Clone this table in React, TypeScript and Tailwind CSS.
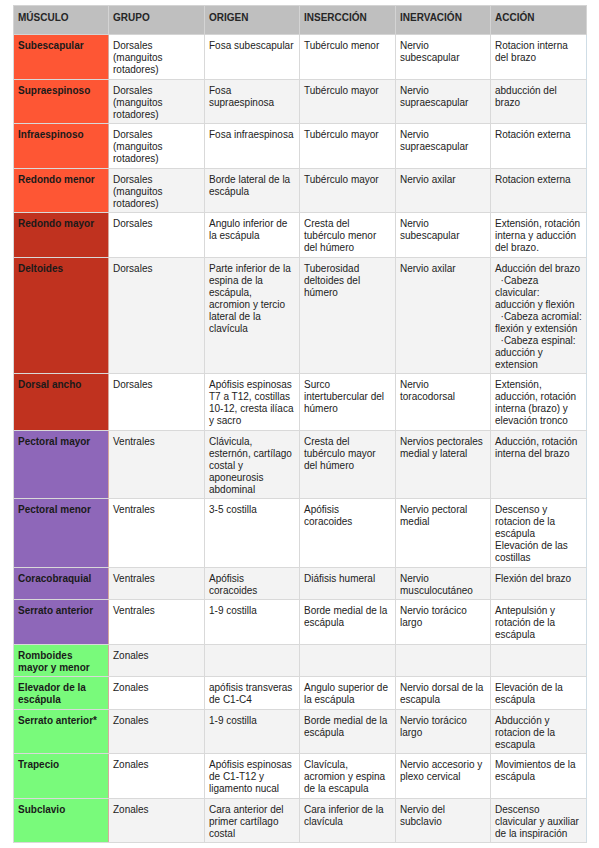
import React from 'react';

type Row = {
  name: string;
  color: string;
  cells: string[];
};

const ORANGE = 'bg-[#fe5634]';
const DARK = 'bg-[#c0321f]';
const PURPLE = 'bg-[#8e67b9]';
const GREEN = 'bg-[#79fa7b]';

const rows: Row[] = [
  { name: 'Subescapular', color: ORANGE, cells: ['Dorsales\n(manguitos\nrotadores)', 'Fosa subescapular', 'Tubérculo menor', 'Nervio\nsubescapular', 'Rotacion interna\ndel brazo'] },
  { name: 'Supraespinoso', color: ORANGE, cells: ['Dorsales\n(manguitos\nrotadores)', 'Fosa\nsupraespinosa', 'Tubérculo mayor', 'Nervio\nsupraescapular', 'abducción del\nbrazo'] },
  { name: 'Infraespinoso', color: ORANGE, cells: ['Dorsales\n(manguitos\nrotadores)', 'Fosa infraespinosa', 'Tubérculo mayor', 'Nervio\nsupraescapular', 'Rotación externa'] },
  { name: 'Redondo menor', color: ORANGE, cells: ['Dorsales\n(manguitos\nrotadores)', 'Borde lateral de la\nescápula', 'Tubérculo mayor', 'Nervio axilar', 'Rotacion externa'] },
  { name: 'Redondo mayor', color: DARK, cells: ['Dorsales', 'Angulo inferior de\nla escápula', 'Cresta del\ntubérculo menor\ndel húmero', 'Nervio\nsubescapular', 'Extensión, rotación\ninterna y aducción\ndel brazo.'] },
  { name: 'Deltoides', color: DARK, cells: ['Dorsales', 'Parte inferior de la\nespina de la\nescápula,\nacromion y tercio\nlateral de la\nclavícula', 'Tuberosidad\ndeltoides del\nhúmero', 'Nervio axilar', 'Aducción del brazo\n\u00a0\u00a0·Cabeza\nclavicular:\naducción y flexión\n\u00a0\u00a0·Cabeza acromial:\nflexión y extensión\n\u00a0\u00a0·Cabeza espinal:\naducción y\nextension'] },
  { name: 'Dorsal ancho', color: DARK, cells: ['Dorsales', 'Apófisis espinosas\nT7 a T12, costillas\n10-12, cresta ilíaca\ny sacro', 'Surco\nintertubercular del\nhúmero', 'Nervio\ntoracodorsal', 'Extensión,\naducción, rotación\ninterna (brazo) y\nelevación tronco'] },
  { name: 'Pectoral mayor', color: PURPLE, cells: ['Ventrales', 'Clávicula,\nesternón, cartílago\ncostal y\naponeurosis\nabdominal', 'Cresta del\ntubérculo mayor\ndel húmero', 'Nervios pectorales\nmedial y lateral', 'Aducción, rotación\ninterna del brazo'] },
  { name: 'Pectoral menor', color: PURPLE, cells: ['Ventrales', '3-5 costilla', 'Apófisis\ncoracoides', 'Nervio pectoral\nmedial', 'Descenso y\nrotacion de la\nescápula\nElevación de las\ncostillas'] },
  { name: 'Coracobraquial', color: PURPLE, cells: ['Ventrales', 'Apófisis\ncoracoides', 'Diáfisis humeral', 'Nervio\nmusculocutáneo', 'Flexión del brazo'] },
  { name: 'Serrato anterior', color: PURPLE, cells: ['Ventrales', '1-9 costilla', 'Borde medial de la\nescápula', 'Nervio torácico\nlargo', 'Antepulsión y\nrotación de la\nescápula'] },
  { name: 'Romboides\nmayor y menor', color: GREEN, cells: ['Zonales', '', '', '', ''] },
  { name: 'Elevador de la\nescápula', color: GREEN, cells: ['Zonales', 'apófisis transveras\nde C1-C4', 'Angulo superior de\nla escápula', 'Nervio dorsal de la\nescapula', 'Elevación de la\nescápula'] },
  { name: 'Serrato anterior*', color: GREEN, cells: ['Zonales', '1-9 costilla', 'Borde medial de la\nescápula', 'Nervio torácico\nlargo', 'Abducción y\nrotacion de la\nescapula'] },
  { name: 'Trapecio', color: GREEN, cells: ['Zonales', 'Apófisis espinosas\nde C1-T12 y\nligamento nucal', 'Clavícula,\nacromion y espina\nde la escapula', 'Nervio accesorio y\nplexo cervical', 'Movimientos de la\nescápula'] },
  { name: 'Subclavio', color: GREEN, cells: ['Zonales', 'Cara anterior del\nprimer cartílago\ncostal', 'Cara inferior de la\nclavícula', 'Nervio del\nsubclavio', 'Descenso\nclavicular y auxiliar\nde la inspiración'] },
];

const headers = ['MÚSCULO', 'GRUPO', 'ORIGEN', 'INSERCCIÓN', 'INERVACIÓN', 'ACCIÓN'];
const widths = [95, 96, 95, 96, 95, 96];

export default function App() {
  return (
    <div className="min-h-[848px] bg-white pl-[13px] pt-[5px] font-['Liberation_Sans',Arial,sans-serif] text-[10px] leading-[12px] text-[#222]">
      <table className="w-[573px] table-fixed border-collapse">
        <colgroup>
          {widths.map((w, i) => (
            <col key={i} style={{ width: w }} />
          ))}
        </colgroup>
        <thead>
          <tr className="h-[29px] bg-[#bfbfbf]">
            {headers.map((h) => (
              <th
                key={h}
                className="border border-[#d4d4d4] px-[4px] pt-[6px] text-left align-top font-bold text-[#262626]"
              >
                {h}
              </th>
            ))}
          </tr>
        </thead>
        <tbody>
          {rows.map((r, i) => (
            <tr key={r.name} className={i % 2 === 0 ? 'bg-white' : 'bg-[#f3f3f3]'}>
              <td
                className={`${r.color} border border-[#d9d9d9] border-r-[#d7a89d] px-[4px] pt-[5px] pb-[2.5px] align-top whitespace-pre font-bold text-[#1a1a1a]`}
              >
                {r.name}
              </td>
              {r.cells.map((c, j) => (
                <td
                  key={j}
                  className={`border border-[#d9d9d9] px-[4px] pt-[5px] pb-[2.5px] align-top whitespace-pre overflow-hidden ${
                    j === 4 ? 'border-r-[#cfdde6]' : ''
                  }`}
                >
                  {c}
                </td>
              ))}
            </tr>
          ))}
        </tbody>
      </table>
    </div>
  );
}
